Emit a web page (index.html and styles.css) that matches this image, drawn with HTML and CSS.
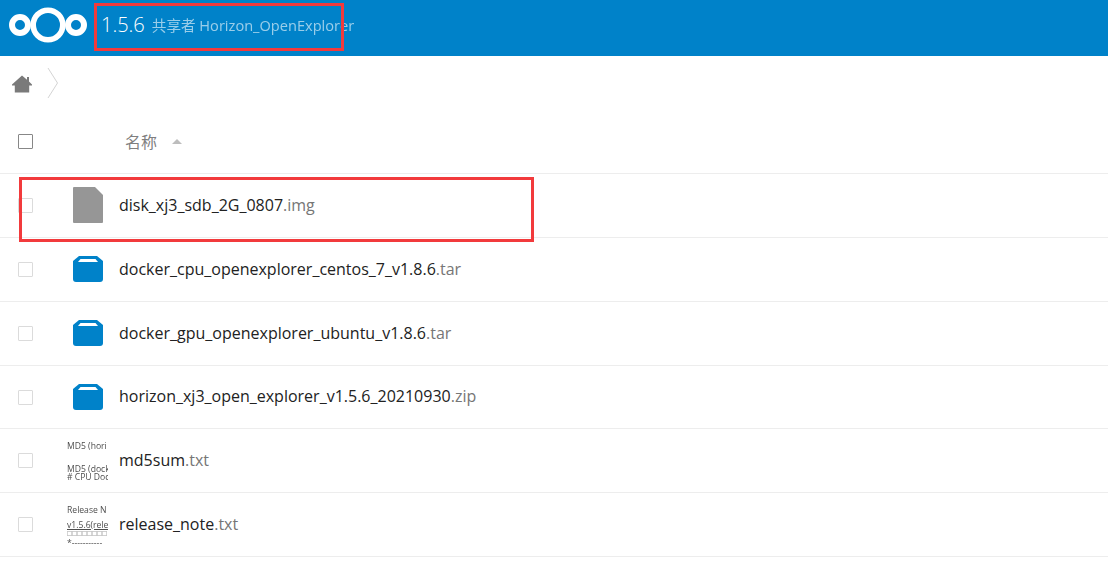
FILE: index.html
```html
<!DOCTYPE html>
<html lang="zh">
<head>
<meta charset="utf-8">
<title>1.5.6</title>
<link rel="stylesheet" href="styles.css">
</head>
<body>
<header class="topbar">
  <svg class="logo" width="78" height="36" viewBox="0 0 78 36"><g fill="none" stroke="#fff"><circle cx="39" cy="18" r="14.8" stroke-width="5.6"/><circle cx="11" cy="18" r="8" stroke-width="6"/><circle cx="67" cy="18" r="8" stroke-width="6"/></g></svg>
  <h1 class="title">1.5.6</h1>
  <span class="owner">共享者 Horizon_OpenExplorer</span>
</header>
<nav class="crumbs">
  <svg class="home" width="20" height="18" viewBox="0 0 20 18"><path fill="#7a7a7a" d="M10 0.5 L15 4.8 V2 H17 V6.6 L20 9.6 V10.5 H17.2 V17.5 H2.8 V10.5 H0 V9.6 Z"/></svg>
  <svg class="chev" width="12" height="32" viewBox="0 0 12 32"><path fill="none" stroke="#d4d4d4" d="M1 1 L10.5 16 L1 31"/></svg>
</nav>
<div class="thead">
  <span class="check check-head"></span>
  <span class="colname">名称</span>
  <span class="sort"></span>
</div>
<ul class="files">
  <li class="row">
    <span class="check"></span>
    <span class="icon"><svg width="30" height="36" viewBox="0 0 30 36"><path fill="#969696" d="M1 0 H22 L30 8 V35 a1 1 0 0 1 -1 1 H1 a1 1 0 0 1 -1 -1 V1 a1 1 0 0 1 1 -1Z"/></svg></span>
    <span class="name">disk_xj3_sdb_2G_0807<span class="ext">.img</span></span>
  </li>
  <li class="row">
    <span class="check"></span>
    <span class="icon"><svg class="folder" width="30" height="26" viewBox="0 0 30 26"><path fill="#0082c9" d="M6 0 H24 L30 5 V23 a3 3 0 0 1 -3 3 H3 a3 3 0 0 1 -3 -3 V5 Z"/><path fill="#fff" d="M7.5 3 H22.5 L25 6 H5 Z"/></svg></span>
    <span class="name">docker_cpu_openexplorer_centos_7_v1.8.6<span class="ext">.tar</span></span>
  </li>
  <li class="row">
    <span class="check"></span>
    <span class="icon"><svg class="folder" width="30" height="26" viewBox="0 0 30 26"><path fill="#0082c9" d="M6 0 H24 L30 5 V23 a3 3 0 0 1 -3 3 H3 a3 3 0 0 1 -3 -3 V5 Z"/><path fill="#fff" d="M7.5 3 H22.5 L25 6 H5 Z"/></svg></span>
    <span class="name">docker_gpu_openexplorer_ubuntu_v1.8.6<span class="ext">.tar</span></span>
  </li>
  <li class="row">
    <span class="check"></span>
    <span class="icon"><svg class="folder" width="30" height="26" viewBox="0 0 30 26"><path fill="#0082c9" d="M6 0 H24 L30 5 V23 a3 3 0 0 1 -3 3 H3 a3 3 0 0 1 -3 -3 V5 Z"/><path fill="#fff" d="M7.5 3 H22.5 L25 6 H5 Z"/></svg></span>
    <span class="name">horizon_xj3_open_explorer_v1.5.6_20210930<span class="ext">.zip</span></span>
  </li>
  <li class="row">
    <span class="check"></span>
    <span class="thumb"><span class="t1">MD5 (hori</span><span class="t2">MD5 (dock</span><span class="t3"># CPU Doc</span></span>
    <span class="name">md5sum<span class="ext">.txt</span></span>
  </li>
  <li class="row">
    <span class="check"></span>
    <span class="thumb"><span class="t4">Release N</span><span class="t5">v1.5.6(rele</span><span class="t6">□□□□□□□□</span><span class="t7">*-----------</span></span>
    <span class="name">release_note<span class="ext">.txt</span></span>
  </li>
</ul>
<div class="mark mark-title"></div>
<div class="mark mark-row"></div>
</body>
</html>
```
FILE: styles.css
```css
* { box-sizing: border-box; }
html, body { margin: 0; padding: 0; }
body {
  position: relative;
  width: 1108px;
  height: 565px;
  overflow: hidden;
  background: #fff;
  font-family: "Open Sans", "Noto Sans CJK SC", sans-serif;
  color: #222;
}
.topbar {
  height: 56px;
  background: #0082c9;
  display: flex;
  align-items: center;
  padding: 0 0 7px 9px;
  color: #fff;
}
.logo { flex: none; margin-right: 14px; }
.title {
  margin: 0 7px 0 0;
  font-size: 20px;
  font-weight: 300;
  line-height: 40px;
}
.owner {
  font-size: 14.6px;
  font-weight: 400;
  color: #fff;
  opacity: .6;
}
.crumbs {
  height: 54px;
  display: flex;
  align-items: center;
  padding-left: 12px;
}
.home { flex: none; margin-right: 15px; margin-top: 1px; }
.chev { flex: none; }
.thead {
  height: 64.05px;
  display: flex;
  align-items: center;
  padding-left: 18px;
  border-bottom: 1px solid #ededed;
}
.check {
  flex: none;
  width: 15px;
  height: 15px;
  border: 1px solid #dbdbdb;
  border-radius: 1px;
  background: #fff;
}
.check-head { border-color: #878787; margin-top: -1px; }
.colname {
  margin-left: 92px;
  font-size: 16px;
  color: #7f7f7f;
  margin-top: -2px;
}
.sort {
  margin-left: 15px;
  width: 0;
  height: 0;
  border-left: 5px solid transparent;
  border-right: 5px solid transparent;
  border-bottom: 5px solid #bdbdbd;
}
.files { margin: 0; padding: 0; list-style: none; }
.row {
  height: 63.85px;
  display: flex;
  align-items: center;
  padding-left: 18px;
  border-bottom: 1px solid #ededed;
}
.icon {
  flex: none;
  width: 30px;
  margin-left: 40px;
  display: flex;
  justify-content: center;
}
.icon svg { display: block; }
.icon .folder { margin-top: -1px; }
.name {
  margin-left: 16px;
  margin-top: -1.2px;
  font-size: 16px;
  color: #222;
  white-space: nowrap;
}
.ext { color: #767676; }
.thumb {
  flex: none;
  width: 41px;
  height: 44px;
  margin-left: 34px;
  margin-right: -5px;
  overflow: hidden;
  display: flex;
  flex-direction: column;
  font-size: 8.6px;
  line-height: 8px;
  color: #4d4d4d;
  white-space: nowrap;
  filter: blur(.25px);
}
.t1 { margin-top: 3px; }
.t2 { margin-top: 15px; }
.t4 { margin-top: 3px; }
.t5 { margin-top: 7px; text-decoration: underline; }
.t6 { font-size: 5px; line-height: 6px; font-weight: 700; margin-top: 1px; }
.t7 { margin-top: 3px; }
.mark {
  position: absolute;
  border: 3px solid #f23a3c;
  pointer-events: none;
}
.mark-title { left: 94px; top: 3px; width: 250px; height: 48px; }
.mark-row { left: 19px; top: 177px; width: 515px; height: 65px; }
```
